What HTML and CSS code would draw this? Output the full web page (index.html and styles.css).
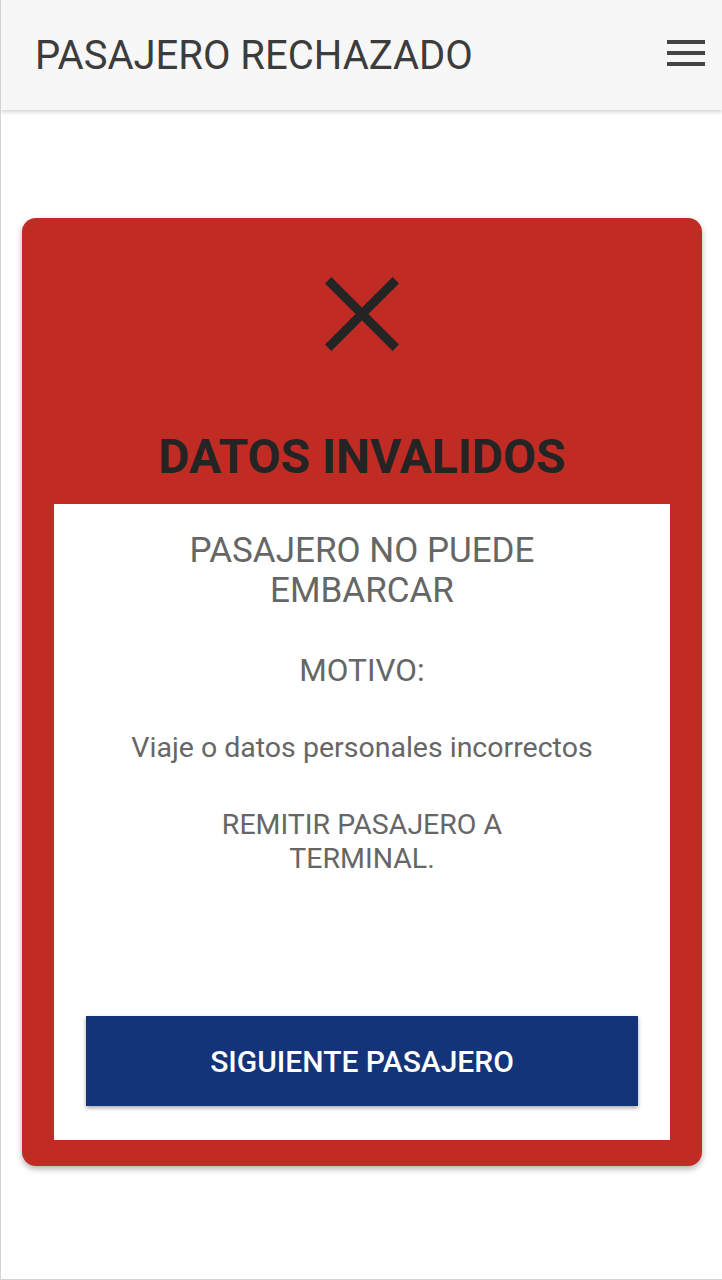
FILE: index.html
```html
<!DOCTYPE html>
<html lang="es">
<head>
<meta charset="utf-8">
<title>Pasajero rechazado</title>
<link rel="stylesheet" href="styles.css">
</head>
<body>
<div class="frame">
  <header class="topbar">
    <h1 class="topbar-title">PASAJERO RECHAZADO</h1>
    <button class="menu-btn" aria-label="Menú">
      <svg width="38" height="26" viewBox="0 0 38 26"><rect x="0" y="0" width="38" height="4" fill="#444"/><rect x="0" y="11" width="38" height="4" fill="#444"/><rect x="0" y="22" width="38" height="4" fill="#444"/></svg>
    </button>
  </header>
  <main class="content">
    <section class="card">
      <div class="card-icon">
        <svg width="74" height="74" viewBox="0 0 74 74"><path d="M3.2 3.2 L70.8 70.8 M70.8 3.2 L3.2 70.8" stroke="#242424" stroke-width="9" stroke-linecap="butt" fill="none"/></svg>
      </div>
      <h2 class="card-title">DATOS INVALIDOS</h2>
      <div class="panel">
        <p class="msg msg-lg">PASAJERO NO PUEDE<br>EMBARCAR</p>
        <p class="msg msg-md msg-motivo">MOTIVO:</p>
        <p class="msg msg-sm msg-reason">Viaje o datos personales incorrectos</p>
        <p class="msg msg-sm msg-remit">REMITIR PASAJERO A<br>TERMINAL.</p>
        <button class="next-btn">SIGUIENTE PASAJERO</button>
      </div>
    </section>
  </main>
</div>
</body>
</html>
```

FILE: styles.css
```css
* { box-sizing: border-box; }
html, body { margin: 0; padding: 0; background: #fff; }
body { font-family: Roboto, "Noto Sans", sans-serif; }

.frame {
  width: 722px;
  height: 1280px;
  border-left: 1px solid #d4d4d4;
  border-bottom: 1px solid #d4d4d4;
  overflow: hidden;
}

.topbar {
  height: 110px;
  background: #f7f7f7;
  box-shadow: 0 2px 4px rgba(0,0,0,0.18);
  display: flex;
  align-items: center;
  justify-content: space-between;
  padding: 0 17px 0 34px;
  position: relative;
  z-index: 1;
}
.topbar-title {
  margin: 0;
  font-size: 40px;
  font-weight: 400;
  color: #3c3c3c;
}
.menu-btn {
  border: 0;
  background: none;
  padding: 0;
  width: 38px;
  height: 26px;
  display: block;
  margin-top: -4px;
}
.menu-btn svg { display: block; }

.content {
  padding: 108px 20px 0 21px;
}

.card {
  background: #c02c24;
  border-radius: 14px;
  padding: 0 32px 26px;
  box-shadow: 0 3px 6px rgba(0,0,0,0.3);
  display: flex;
  flex-direction: column;
  align-items: stretch;
}
.card-icon {
  display: flex;
  justify-content: center;
  margin-top: 59px;
}
.card-icon svg { display: block; }
.card-title {
  margin: 78px 0 19px;
  text-align: center;
  font-size: 48px;
  line-height: 56px;
  font-weight: 700;
  color: #242424;
}

.panel {
  background: #fff;
  height: 636px;
  padding: 27px 32px 34px;
  display: flex;
  flex-direction: column;
  align-items: stretch;
}
.msg {
  margin: 0;
  text-align: center;
  color: #666;
}
.msg-lg { font-size: 35px; line-height: 40px; }
.msg-md { font-size: 31.5px; line-height: 40px; }
.msg-sm { font-size: 28.5px; line-height: 34px; }
.msg-motivo { margin-top: 40px; }
.msg-reason { margin-top: 40px; }
.msg-remit { margin-top: 43px; }

.next-btn {
  margin-top: auto;
  height: 90px;
  border: 0;
  background: #14347a;
  color: #fff;
  font-family: Roboto, "Noto Sans", sans-serif;
  font-size: 30px;
  font-weight: 500;
  box-shadow: 0 2px 4px rgba(0,0,0,0.35);
}
```
